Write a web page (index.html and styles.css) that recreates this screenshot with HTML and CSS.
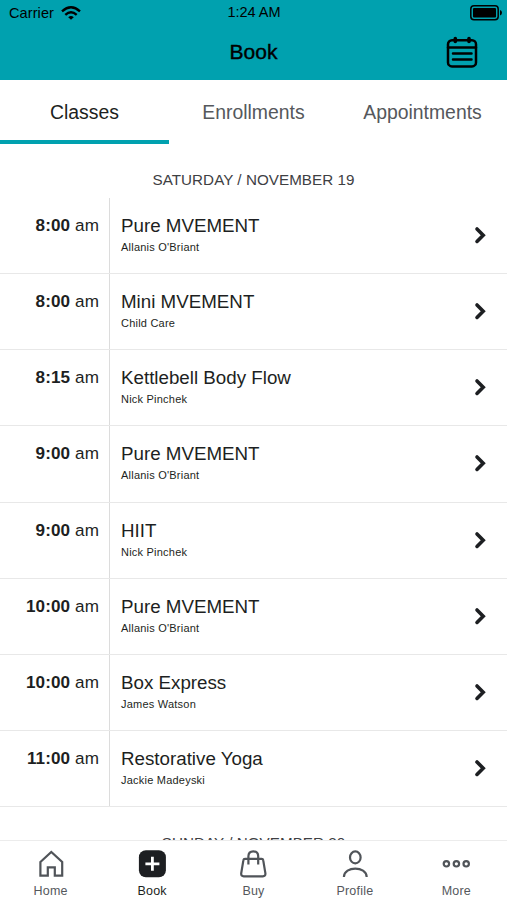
FILE: index.html
```html
<!DOCTYPE html>
<html lang="en">

<head>
	<meta charset="utf-8">
	<meta name="viewport" content="width=device-width, initial-scale=1.0">
	<title>Book</title>
	<link rel="stylesheet" href="styles.css">
</head>

<body>
	<header class="header">
		<div class="status">
			<div class="carrier">
				<span>Carrier</span>
				<svg class="wifi" width="20" height="14" viewBox="0 0 20 14" fill="none" stroke="#000" stroke-width="2.4">
					<path d="M1 5.3 Q10 -2.6 19 5.3" />
					<path d="M4.3 8.9 Q10 3.8 15.7 8.9" />
					<path d="M10 13.8 L7.2 11.2 Q10 8.9 12.8 11.2 Z" fill="#000" stroke="none" />
				</svg>
			</div>
			<span class="clock">1:24 AM</span>
			<svg class="battery" width="33" height="16" viewBox="0 0 33 16">
				<rect x=".8" y=".8" width="27.4" height="13.9" rx="3.2" fill="none" stroke="#000" stroke-width="1.5" />
				<rect x="3" y="3" width="23" height="9.5" rx="1" />
				<path d="M30 5 Q32 5.6 32 7.7 Q32 9.8 30 10.5 Z" />
			</svg>
		</div>
		<div class="title-bar">
			<h1>Book</h1>
			<svg class="calendar" width="32" height="32" viewBox="0 0 32 32" fill="none" stroke="#000" stroke-width="2.5" stroke-linecap="round">
				<rect x="2" y="4.2" width="28" height="26.2" rx="4" />
				<path d="M2 11.4 H30 M7 17.6 H25.5 M7 23.6 H25.5" />
				<path d="M9.3 2.5 V5.5 M23 2.5 V5.5" stroke-width="3.6" />
			</svg>
		</div>
	</header>

	<nav class="tabs">
		<a class="tab selected">Classes</a>
		<a class="tab">Enrollments</a>
		<a class="tab">Appointments</a>
	</nav>

	<main class="schedule">
		<h2>SATURDAY / NOVEMBER 19</h2>
		<ul id="classes"></ul>
		<h2 class="next-day">SUNDAY / NOVEMBER 20</h2>
	</main>

	<nav class="menu">
		<a class="item">
			<svg width="28" height="30" viewBox="0 0 28 30">
				<path d="M3.4 13 L14.3 3 L25.2 13 V26.6 H17.8 V18.4 H10.8 V26.6 H3.4 Z" />
			</svg>
			<span>Home</span>
		</a>
		<a class="item active">
			<svg width="28" height="30" viewBox="0 0 28 30">
				<rect class="solid" x=".9" y="1.3" width="27" height="27" rx="7" />
				<path class="plus" d="M14.4 7.8 V21.8 M7.4 14.8 H21.4" />
			</svg>
			<span>Book</span>
		</a>
		<a class="item">
			<svg width="28" height="30" viewBox="0 0 28 30">
				<path d="M6 9.8 H22.6 Q24 9.8 24.2 11.2 L26.4 24.3 Q26.6 27.3 23.9 27.3 H4.7 Q2 27.3 2.2 24.3 L4.4 11.2 Q4.6 9.8 6 9.8 Z" />
				<path d="M9.4 15.5 V7.3 Q9.4 2.4 14.3 2.4 Q19.2 2.4 19.2 7.3 V15.5" />
			</svg>
			<span>Buy</span>
		</a>
		<a class="item">
			<svg width="28" height="30" viewBox="0 0 28 30">
				<ellipse cx="14.3" cy="8.4" rx="5.3" ry="6" />
				<path d="M2.9 28 C3.3 16.8 25.3 16.8 25.7 28" />
			</svg>
			<span>Profile</span>
		</a>
		<a class="item">
			<svg width="28" height="30" viewBox="0 0 28 30">
				<circle cx="4.4" cy="14.8" r="2.7" />
				<circle cx="14.4" cy="14.8" r="2.7" />
				<circle cx="24.2" cy="14.8" r="2.7" />
			</svg>
			<span>More</span>
		</a>
	</nav>

	<script type="text/javascript">
		const classes = [
			['8:00', 'Pure MVEMENT', "Allanis O'Briant"],
			['8:00', 'Mini MVEMENT', 'Child Care'],
			['8:15', 'Kettlebell Body Flow', 'Nick Pinchek'],
			['9:00', 'Pure MVEMENT', "Allanis O'Briant"],
			['9:00', 'HIIT', 'Nick Pinchek'],
			['10:00', 'Pure MVEMENT', "Allanis O'Briant"],
			['10:00', 'Box Express', 'James Watson'],
			['11:00', 'Restorative Yoga', 'Jackie Madeyski']
		]

		document.querySelector('#classes').innerHTML = classes.map(([time, name, teacher]) => `
			<li class="row">
				<div class="time"><b>${time}</b> am</div>
				<div class="info">
					<h3>${name}</h3>
					<p>${teacher}</p>
				</div>
				<svg class="chevron" width="12" height="18" viewBox="0 0 12 18">
					<path d="M3 3 L9.2 9.2 L3 15.4" />
				</svg>
			</li>`).join('')
	</script>
</body>

</html>
```
FILE: styles.css
```css
* {
	margin: 0;
	padding: 0;
	box-sizing: border-box;
	font-family: "Liberation Sans", Arial, sans-serif;
}

body {
	width: 100%;
	height: 100vh;
	background: #fff;
	color: #1d1f22;
	display: flex;
	flex-direction: column;
	overflow: hidden;
}

svg {
	display: block;
}

.header {
	height: 80px;
	flex: none;
	background: #00a1af;
	color: #000;
}

.status {
	height: 25px;
	display: grid;
	grid-template-columns: 1fr auto 1fr;
	align-items: center;
	padding: 0 4px 0 9px;
	font-size: 14.5px;
}

.carrier {
	display: flex;
	align-items: center;
	gap: 7px;
	letter-spacing: .1px;
}

.clock {
	margin: 0 4px 2px 0;
}

.battery {
	justify-self: end;
}

.title-bar {
	height: 53px;
	display: grid;
	grid-template-columns: 1fr auto 1fr;
	align-items: center;
	padding: 0 29px;
}

h1 {
	grid-column: 2;
	font-size: 21px;
	font-weight: normal;
	-webkit-text-stroke: .4px #000;
}

.calendar {
	justify-self: end;
}

.tabs {
	height: 64px;
	flex: none;
	display: grid;
	grid-template-columns: repeat(3, 1fr);
}

.tab {
	height: 64px;
	text-align: center;
	line-height: 64px;
	font-size: 19.4px;
	color: #55585c;
}

.selected {
	color: #1d1f22;
	border-bottom: 4px solid #00a1af;
}

.schedule {
	flex: 1;
	min-height: 0;
	overflow: hidden;
}

h2 {
	height: 54px;
	padding-top: 18px;
	line-height: 36px;
	text-align: center;
	font-size: 15.2px;
	font-weight: normal;
	letter-spacing: .05px;
	color: #3e4043;
}

ul {
	list-style: none;
}

.row {
	height: 76.15px;
	display: flex;
	border-bottom: 1px solid #e8e8e8;
}

.time {
	width: 110px;
	padding: 18px 10px 0 0;
	border-right: 1px solid #dcdcdc;
	text-align: right;
	font-size: 17.1px;
	line-height: 20px;
	letter-spacing: .1px;
}

.info {
	flex: 1;
	padding: 17px 0 0 11px;
}

h3 {
	font-size: 18.75px;
	line-height: 22px;
	font-weight: normal;
}

p {
	margin-top: 2px;
	font-size: 11px;
	line-height: 16px;
	letter-spacing: .22px;
}

.chevron {
	margin: 28px 21px 0 0;
	fill: none;
	stroke: #1d1f22;
	stroke-width: 3.6;
	stroke-linecap: round;
}

.menu {
	height: 60px;
	flex: none;
	display: grid;
	grid-template-columns: repeat(5, 1fr);
	border-top: 1px solid #ececec;
	background: #fff;
}

.item {
	display: flex;
	flex-direction: column;
	align-items: center;
	padding-top: 8px;
	font-size: 12.5px;
	letter-spacing: .2px;
	color: #55585c;
}

.item svg {
	fill: none;
	stroke: #505459;
	stroke-width: 2.2;
}

.item span {
	margin-top: 4px;
	line-height: 16px;
}

.active {
	color: #1d1f22;
}

.item .solid {
	fill: #1d1f22;
	stroke: none;
}

.item .plus {
	stroke: #fff;
	stroke-width: 2.8;
}
```
